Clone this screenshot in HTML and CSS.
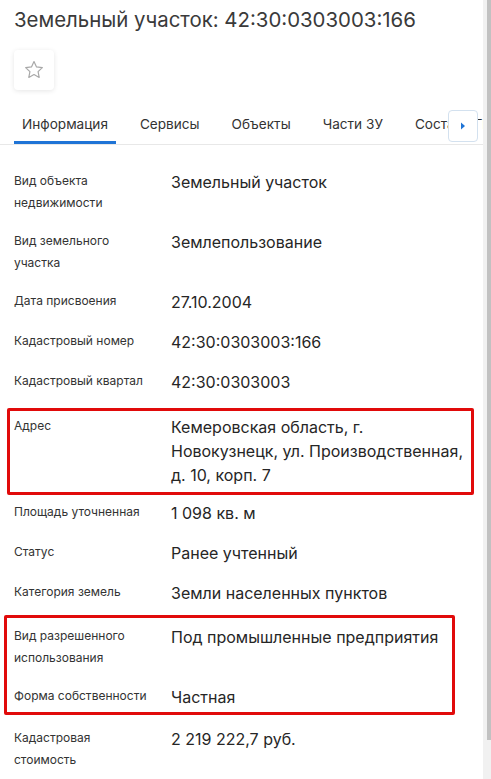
FILE: index.html
```html
<!DOCTYPE html>
<html lang="ru">
<head>
<meta charset="utf-8">
<title>Земельный участок</title>
<link rel="stylesheet" href="styles.css">
</head>
<body>
<div class="page">
  <h1 class="title">Земельный участок: 42:30:0303003:166</h1>
  <button class="fav" type="button" aria-label="В избранное">
    <svg width="22" height="22" viewBox="0 0 24 24"><path d="M12 2.8l2.75 5.8 6.35.8-4.65 4.4 1.2 6.3L12 17l-5.65 3.1 1.2-6.3L2.9 9.4l6.35-.8z" fill="none" stroke="#a8a8a8" stroke-width="1.3" stroke-linejoin="round"/></svg>
  </button>
  <nav class="tabs">
    <div class="tab-strip">
      <span class="tab active">Информация</span>
      <span class="tab">Сервисы</span>
      <span class="tab">Объекты</span>
      <span class="tab">Части ЗУ</span>
      <span class="tab">Состав ЕГРН</span>
    </div>
    <button class="tab-next" type="button" aria-label="Далее">
      <svg width="6" height="8" viewBox="0 0 6 8"><path d="M1 0.5L5 4 1 7.5z" fill="#1f74d6"/></svg>
    </button>
  </nav>
  <div class="rows">
    <div class="row"><div class="label">Вид объекта недвижимости</div><div class="value">Земельный участок</div></div>
    <div class="row"><div class="label">Вид земельного участка</div><div class="value">Землепользование</div></div>
    <div class="row"><div class="label">Дата присвоения</div><div class="value">27.10.2004</div></div>
    <div class="row"><div class="label">Кадастровый номер</div><div class="value">42:30:0303003:166</div></div>
    <div class="row"><div class="label">Кадастровый квартал</div><div class="value">42:30:0303003</div></div>
    <div class="marked mark-address">
      <div class="row"><div class="label">Адрес</div><div class="value">Кемеровская область, г. Новокузнецк, ул. Производственная, д. 10, корп. 7</div></div>
    </div>
    <div class="row"><div class="label">Площадь уточненная</div><div class="value">1 098 кв. м</div></div>
    <div class="row"><div class="label">Статус</div><div class="value">Ранее учтенный</div></div>
    <div class="row"><div class="label">Категория земель</div><div class="value">Земли населенных пунктов</div></div>
    <div class="marked mark-use">
      <div class="row"><div class="label">Вид разрешенного использования</div><div class="value">Под промышленные предприятия</div></div>
      <div class="row"><div class="label">Форма собственности</div><div class="value">Частная</div></div>
    </div>
    <div class="row"><div class="label">Кадастровая стоимость</div><div class="value">2 219 222,7 руб.</div></div>
  </div>
</div>
<div class="scrollbar"><div class="thumb"></div></div>
</body>
</html>
```
FILE: styles.css
```css
html, body {
  margin: 0;
  height: 100%;
}
body {
  display: flex;
  overflow: hidden;
  background: #fff;
  font-family: Inter, "Noto Sans", sans-serif;
  color: #2b2b2b;
}
.page {
  flex: 1;
  min-width: 0;
  padding: 6px 14px 0;
  overflow: hidden;
}
.title {
  margin: 0;
  font-size: 20.4px;
  line-height: 28px;
  font-weight: 400;
  color: #3a3a3a;
  white-space: nowrap;
}
.fav {
  display: flex;
  align-items: center;
  justify-content: center;
  width: 40px;
  height: 40px;
  margin-top: 16px;
  padding: 0;
  border: none;
  border-radius: 4px;
  background: #fff;
  box-shadow: 0 1px 5px rgba(0, 0, 0, 0.1);
}
.tabs {
  position: relative;
  margin: 14px -14px 0;
  padding-left: 14px;
  border-bottom: 1px solid #e8e8e8;
}
.tab-strip {
  display: flex;
  gap: 16px;
  overflow: hidden;
  white-space: nowrap;
}
.tab {
  flex: none;
  padding: 10px 8px 7px;
  font-size: 13.6px;
  line-height: 20px;
  color: #333;
  border-bottom: 3px solid transparent;
}
.tab.active {
  border-bottom-color: #1f74d6;
}
.tab-next {
  position: absolute;
  left: 448px;
  top: 6px;
  width: 30px;
  height: 32px;
  padding: 0;
  display: flex;
  align-items: center;
  justify-content: center;
  background: #fff;
  border: 1px solid #d3e1ef;
  border-radius: 4px;
}
.rows {
  display: flex;
  flex-direction: column;
  gap: 16px;
  margin-top: 25px;
}
.row {
  display: grid;
  grid-template-columns: 157px 294px;
}
.label {
  font-size: 12px;
  line-height: 22px;
  color: #333;
  padding-right: 20px;
}
.value {
  font-size: 16px;
  line-height: 24px;
  color: #262626;
}
.marked {
  position: relative;
  display: flex;
  flex-direction: column;
  gap: 16px;
}
.marked::after {
  content: "";
  position: absolute;
  border: 3px solid #e10a0a;
  border-radius: 2px;
  pointer-events: none;
}
.mark-address {
  margin-top: 5px;
  margin-bottom: -2px;
}
.mark-address::after {
  top: -7px;
  bottom: -8px;
  left: -7px;
  right: -5px;
}
.mark-use {
  margin-top: 4px;
  margin-bottom: 2px;
}
.mark-use::after {
  top: -10px;
  bottom: -6px;
  left: -10px;
  right: 14px;
}
.scrollbar {
  flex: none;
  width: 8px;
  background: #f1f1f1;
  display: flex;
  justify-content: flex-end;
  align-items: flex-start;
}
.thumb {
  width: 4px;
  height: 740px;
  background: #c1c1c1;
}
```
